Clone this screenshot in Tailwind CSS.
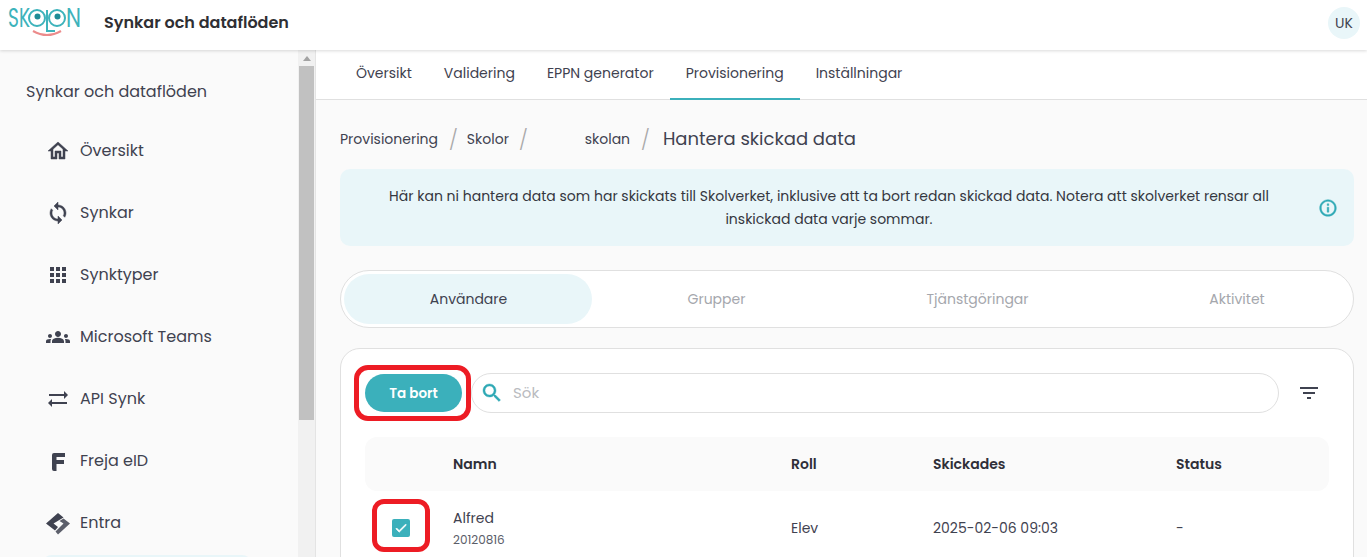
<!DOCTYPE html>
<html lang="sv">
<head>
  <meta charset="UTF-8">
  <title>Synkar och dataflöden</title>
  <script src="https://cdn.jsdelivr.net/npm/@tailwindcss/browser@4"></script>
</head>
<body class="bg-[#fafafa] text-[#3f4250] font-['Poppins','Lato','Open_Sans',sans-serif] w-[1367px] h-[557px] overflow-hidden">
  <!-- top bar -->
  <header class="h-[50px] bg-white flex items-center pl-[7px] pr-[7px] shadow-[0_1px_3px_rgba(0,0,0,0.15)] relative z-10">
    <svg class="w-[76px] h-[40px] mb-[10px]" viewBox="0 0 76 40" fill="none">
      <text x="1" y="27" font-size="26" fill="#3db3bb" font-weight="400" textLength="22" lengthAdjust="spacingAndGlyphs">SK</text>
      <circle cx="30" cy="18" r="8" stroke="#3db3bb" stroke-width="2"/>
      <circle cx="30.500" cy="16.500" r="3" fill="#1f8c96"/>
      <path d="M40 10V31H48" stroke="#3db3bb" stroke-width="2"/>
      <circle cx="50" cy="18" r="8" stroke="#3db3bb" stroke-width="2"/>
      <circle cx="50.500" cy="16.500" r="3" fill="#1f8c96"/>
      <text x="59" y="27" font-size="26" fill="#3db3bb" font-weight="400" textLength="15" lengthAdjust="spacingAndGlyphs">N</text>
      <path d="M26 31Q40 39 54 31" stroke="#ec8b8b" stroke-width="2.200"/>
    </svg>
    <h1 class="ml-[21px] mb-[4px] text-[16px] font-semibold text-[#2f2f33]">Synkar och dataflöden</h1>
    <div class="ml-auto mb-[4px] w-[32px] h-[32px] rounded-full bg-[#e9f6f9] flex items-center justify-center text-[14px]">UK</div>
  </header>

  <div class="flex h-[507px] overflow-hidden">
    <!-- sidebar -->
    <aside class="relative w-[316px] shrink-0 border-r border-[#e4e4e4] overflow-hidden">
      <div class="pl-[26px] pt-[30px] text-[16px] leading-[24px]">Synkar och dataflöden</div>
      <ul class="mt-[16px] text-[16px]">
        <li class="h-[62px] flex items-center pl-[46px] gap-[10px]">
          <svg class="w-[24px] h-[24px]" viewBox="0 0 24 24" fill="#3f4250" stroke="#3f4250" stroke-width="0.5"><path d="M12 5.690l5 4.500V18h-2v-6H9v6H7v-7.810l5-4.500M12 3L2 12h3v8h6v-6h2v6h6v-8h3L12 3z"/></svg>
          <span>Översikt</span>
        </li>
        <li class="h-[62px] flex items-center pl-[46px] gap-[10px]">
          <svg class="w-[24px] h-[24px]" viewBox="0 0 24 24" fill="#3f4250" stroke="#3f4250" stroke-width="0.5"><path d="M12 4V1L8 5l4 4V6c3.310 0 6 2.690 6 6 0 1.010-.25 1.970-.7 2.800l1.460 1.460C19.540 15.030 20 13.570 20 12c0-4.420-3.580-8-8-8zm0 14c-3.310 0-6-2.690-6-6 0-1.010.25-1.970.7-2.800L5.240 7.740C4.460 8.970 4 10.430 4 12c0 4.420 3.580 8 8 8v3l4-4-4-4v3z"/></svg>
          <span>Synkar</span>
        </li>
        <li class="h-[62px] flex items-center pl-[46px] gap-[10px]">
          <svg class="w-[24px] h-[24px]" viewBox="0 0 24 24" fill="#3f4250"><path d="M4 8h4V4H4v4zm6 12h4v-4h-4v4zm-6 0h4v-4H4v4zm0-6h4v-4H4v4zm6 0h4v-4h-4v4zm6-10v4h4V4h-4zm-6 4h4V4h-4v4zm6 6h4v-4h-4v4zm0 6h4v-4h-4v4z"/></svg>
          <span>Synktyper</span>
        </li>
        <li class="h-[62px] flex items-center pl-[46px] gap-[10px]">
          <svg class="w-[24px] h-[24px]" viewBox="0 0 24 24" fill="#3f4250"><path d="M12 12.750c1.630 0 3.070.39 4.240.9 1.080.48 1.760 1.560 1.760 2.730V18H6v-1.610c0-1.180.68-2.260 1.760-2.730 1.170-.52 2.610-.91 4.240-.91zM4 13c1.100 0 2-.9 2-2s-.9-2-2-2-2 .9-2 2 .9 2 2 2zm1.130 1.100C4.760 14.040 4.390 14 4 14c-.99 0-1.930.21-2.780.58C.48 14.900 0 15.620 0 16.430V18h4.500v-1.610c0-.83.23-1.610.63-2.290zM20 13c1.100 0 2-.9 2-2s-.9-2-2-2-2 .9-2 2 .9 2 2 2zm4 3.430c0-.81-.48-1.530-1.220-1.850C21.930 14.210 20.990 14 20 14c-.39 0-.76.04-1.130.1.4.68.63 1.460.63 2.290V18H24v-1.570zM12 6c1.660 0 3 1.340 3 3s-1.340 3-3 3-3-1.340-3-3 1.340-3 3-3z"/></svg>
          <span>Microsoft Teams</span>
        </li>
        <li class="h-[62px] flex items-center pl-[46px] gap-[10px]">
          <svg class="w-[24px] h-[24px]" viewBox="0 0 24 24" fill="#3f4250"><path d="M22 8l-4-4v3H3v2h15v3l4-4zM2 16l4 4v-3h15v-2H6v-3l-4 4z"/></svg>
          <span>API Synk</span>
        </li>
        <li class="h-[62px] flex items-center pl-[46px] gap-[10px]">
          <svg class="w-[24px] h-[24px]" viewBox="0 0 24 24" fill="#3f4250"><path d="M6 6Q6 4 8 4H19V8H10.500V11H18V15H10.500V22H8Q6 22 6 20Z"/></svg>
          <span>Freja eID</span>
        </li>
        <li class="h-[62px] flex items-center pl-[46px] gap-[10px]">
          <svg class="w-[24px] h-[24px]" viewBox="0 0 24 24" fill="#3f4250"><path d="M12 2L17.500 6.500L7.500 12.500L12 16L9 19.500L0 12.500Z"/><path d="M17.500 7.500L24 12.500L12 23.500L9.500 20.500L17.500 12.500L13.500 10Z" fill="#5c5f6b"/></svg>
          <span>Entra</span>
        </li>
      </ul>
      <div class="absolute left-[42px] top-[505px] w-[210px] h-[40px] rounded-[10px] bg-[#e9f6f9]"></div>
      <!-- scrollbar -->
      <div class="absolute right-0 top-0 bottom-0 w-[17px] bg-[#f1f1f1] flex flex-col items-center">
        <div class="mt-[6px] w-0 h-0 border-x-[4px] border-x-transparent border-b-[5px] border-b-[#a3a3a3]"></div>
        <div class="mt-[5px] w-[15px] h-[354px] bg-[#c1c1c1]"></div>
      </div>
    </aside>

    <main class="flex-1 min-w-0 overflow-hidden">
      <nav class="h-[50px] bg-white border-b border-[#e0e0e0] flex pl-[24px] text-[14px]">
        <a class="px-[16px] flex items-center pb-[3px]">Översikt</a>
        <a class="px-[16px] flex items-center pb-[3px]">Validering</a>
        <a class="px-[16px] flex items-center pb-[3px]">EPPN generator</a>
        <a class="px-[16px] flex items-center pb-[1px] border-b-2 border-[#3bb0bb] h-[50px]">Provisionering</a>
        <a class="px-[16px] flex items-center pb-[3px]">Inställningar</a>
      </nav>

      <div class="pl-[24px] pr-[13px]">
        <!-- breadcrumb -->
        <div class="h-[69px] flex items-center text-[14px] pt-[10px]">
          <span>Provisionering</span>
          <span class="ml-[11px] mr-[9px] text-[20px] leading-none text-[#a9a9a9] font-light">/</span>
          <span>Skolor</span>
          <span class="ml-[10px] text-[20px] leading-none text-[#a9a9a9] font-light">/</span>
          <span class="ml-[57px]">skolan</span>
          <span class="mx-[11px] text-[20px] leading-none text-[#a9a9a9] font-light">/</span>
          <span class="ml-[2px] text-[18px] pb-[2px]">Hantera skickad data</span>
        </div>

        <!-- info -->
        <div class="relative h-[77px] rounded-[10px] bg-[#e9f6f9] flex items-center text-center text-[14px] leading-[23px] text-[#35373f] pl-[39px]">
          <p class="w-[900px]">Här kan ni hantera data som har skickats till Skolverket, inklusive att ta bort redan skickad data. Notera att skolverket rensar all inskickad data varje sommar.</p>
          <svg class="absolute right-[16px] top-[29px] w-[20px] h-[20px]" viewBox="0 0 24 24" fill="#2fa9b5" stroke="#2fa9b5" stroke-width="0.5"><path d="M11 7h2v2h-2zm0 4h2v6h-2zm1-9C6.480 2 2 6.480 2 12s4.480 10 10 10 10-4.480 10-10S17.520 2 12 2zm0 18c-4.410 0-8-3.590-8-8s3.590-8 8-8 8 3.590 8 8-3.590 8-8 8z"/></svg>
        </div>

        <!-- tabs -->
        <div class="mt-[24px] h-[58px] rounded-full border border-[#e0e0e0] bg-white flex items-center pl-[3px] text-[14px]">
          <div class="w-[248px] h-[50px] rounded-full bg-[#e9f6f9] flex items-center justify-center pl-[1px]">Användare</div>
          <div class="w-[248px] text-center text-[#a5a7ad] pl-[1px]">Grupper</div>
          <div class="w-[274px] text-center text-[#a5a7ad] pl-[1px]">Tjänstgöringar</div>
          <div class="w-[226px] ml-[10px] text-center text-[#a5a7ad]">Aktivitet</div>
        </div>

        <!-- card -->
        <section class="relative mt-[20px] h-[300px] rounded-[20px] border border-[#e0e0e0] bg-white px-[24px] pt-[24px]">
          <div class="flex items-center">
            <button class="w-[97px] h-[38px] rounded-full bg-[#3bb0bb] text-white text-[13.5px] font-semibold pt-[3px]">Ta bort</button>
            <div class="ml-[9px] w-[808px] h-[40px] rounded-full border border-[#e0e0e0] flex items-center pl-[8px] gap-[9px] text-[15px] text-[#b9bbc0]">
              <svg class="w-[24px] h-[24px]" viewBox="0 0 24 24" fill="#2fa9b5" stroke="#2fa9b5" stroke-width="0.4"><path d="M15.500 14h-.79l-.28-.27C15.410 12.590 16 11.110 16 9.500 16 5.910 13.090 3 9.500 3S3 5.910 3 9.500 5.910 16 9.500 16c1.610 0 3.090-.59 4.230-1.570l.27.28v.79l5 4.990L20.490 19l-4.990-5zm-6 0C7.010 14 5 11.990 5 9.500S7.010 5 9.500 5 14 7.010 14 9.500 11.990 14 9.500 14z"/></svg>
              <span>Sök</span>
            </div>
            <svg class="ml-[18px] w-[24px] h-[24px]" viewBox="0 0 24 24" fill="#3f4250"><path d="M10 18h4v-2h-4v2zM3 6v2h18V6H3zm3 7h12v-2H6v2z"/></svg>
          </div>

          <div class="mt-[24px] h-[54px] rounded-[12px] bg-[#fafafa] grid grid-cols-[88px_338px_142px_243px_1fr] items-center text-[14px] font-semibold text-[#2f2f38]">
            <span></span><span>Namn</span><span>Roll</span><span>Skickades</span><span>Status</span>
          </div>
          <div class="h-[74px] grid grid-cols-[88px_338px_142px_243px_1fr] items-center text-[14px]">
            <div class="pl-[27px]">
              <div class="w-[18px] h-[18px] rounded-[2px] bg-[#3bb0bb] flex items-center justify-center">
                <svg class="w-[18px] h-[18px]" viewBox="0 0 24 24" fill="white" stroke="white" stroke-width="1"><path d="M9 16.170L4.830 12l-1.420 1.410L9 19 21 7l-1.410-1.410z" transform="translate(2.400 2.400) scale(0.8)"/></svg>
              </div>
            </div>
            <div class="flex flex-col pt-[3px]">
              <span class="leading-[21px]">Alfred</span>
              <span class="text-[12px] leading-[22px] text-[#5b5e69]">20120816</span>
            </div>
            <span>Elev</span>
            <span>2025-02-06 09:03</span>
            <span>-</span>
          </div>

          <!-- annotation marks -->
          <div class="absolute left-[13px] top-[16px] w-[117px] h-[56px] rounded-[14px] border-[5px] border-[#ed1c24]"></div>
          <div class="absolute left-[31px] top-[150px] w-[58px] h-[53px] rounded-[12px] border-[5px] border-[#ed1c24]"></div>
        </section>
      </div>
    </main>
  </div>
</body>
</html>
